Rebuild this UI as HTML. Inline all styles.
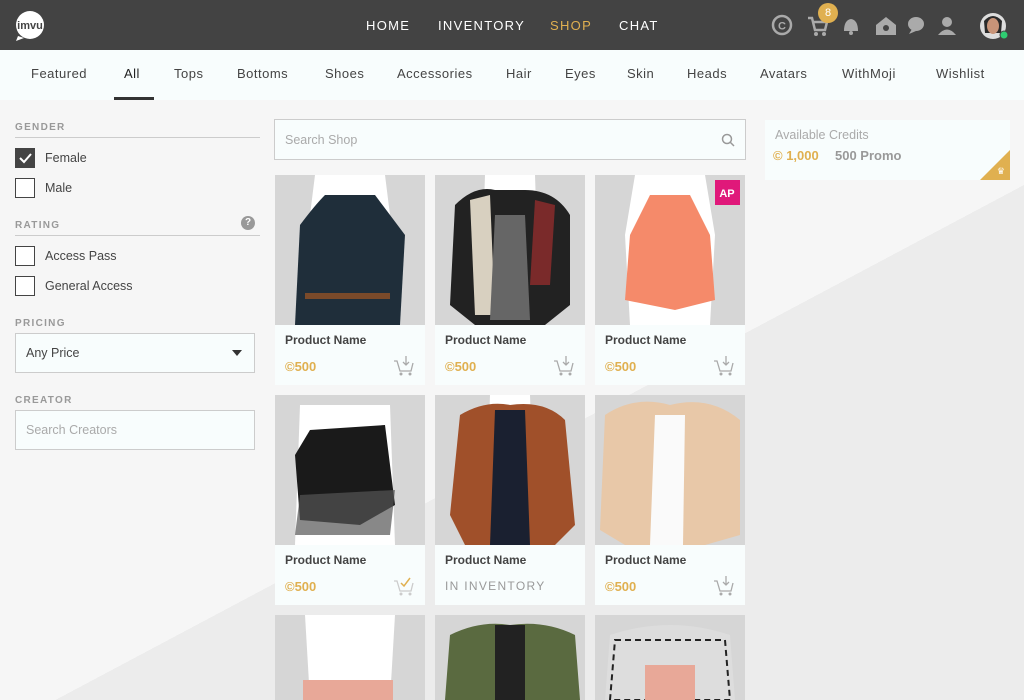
<!DOCTYPE html>
<html><head><meta charset="utf-8"><style>
*{box-sizing:border-box;margin:0;padding:0}
html,body{width:1024px;height:700px;overflow:hidden}
body{font-family:"Liberation Sans",sans-serif;background:#f2f2f2;position:relative}
.bgdiag{position:absolute;left:0;top:100px;width:1024px;height:600px;background:linear-gradient(152deg,#f6f6f6 0,#f6f6f6 55%,#ececec 55%,#ececec 100%)}
.hdr{position:absolute;left:0;top:0;width:1024px;height:50px;background:#434343}
.nav{position:absolute;top:18px;font-size:13px;letter-spacing:1.3px;color:#fff}
.sub{position:absolute;left:0;top:50px;width:1024px;height:50px;background:#f8fdfd}
.sub span{position:absolute;top:16px;font-size:13px;color:#444;letter-spacing:.5px}
.lbl{position:absolute;left:15px;font-size:10px;letter-spacing:1.3px;color:#999;font-weight:bold}
.line{position:absolute;left:15px;width:245px;height:1px;background:#ccc}
.cb{position:absolute;left:15px;width:20px;height:20px;border:1px solid #444;background:#fff}
.cbt{position:absolute;left:45px;font-size:12.5px;color:#444}
.box{position:absolute;background:#f8fdfd;border:1px solid #ccc}
.card{position:absolute;width:150px;height:210px;background:#f8fdfd;overflow:hidden}
.card svg{display:block}
.pn{position:absolute;left:10px;top:158px;font-size:12px;font-weight:bold;color:#444}
.pr{position:absolute;left:10px;top:184px;font-size:13px;color:#e0b050;font-weight:bold}
.cart{position:absolute;right:10px;top:180px}
</style></head><body>
<div class="bgdiag"></div>
<div class="hdr">
<svg style="position:absolute;left:14px;top:10px" width="32" height="32" viewBox="0 0 32 32"><circle cx="16" cy="15" r="14" fill="#fff"/><path d="M4 26 L2 31 L10 28Z" fill="#fff"/><text x="16" y="19" font-size="11" font-weight="bold" text-anchor="middle" fill="#434343" font-family="Liberation Sans">imvu</text></svg>
<span class="nav" style="left:366px">HOME</span><span class="nav" style="left:438px">INVENTORY</span><span class="nav" style="left:550px;color:#e0b050">SHOP</span><span class="nav" style="left:619px">CHAT</span>
<svg style="position:absolute;left:770px;top:13px" width="240" height="26" viewBox="0 0 240 26">
<circle cx="12" cy="12" r="9" fill="none" stroke="#aaa" stroke-width="2.5"/><text x="12" y="16.5" font-size="11" font-weight="bold" text-anchor="middle" fill="#aaa" font-family="Liberation Sans">C</text>
<path d="M38 5h4l3 12h10l2-8H44" fill="none" stroke="#aaa" stroke-width="2.5"/><circle cx="46" cy="21" r="2" fill="#aaa"/><circle cx="54" cy="21" r="2" fill="#aaa"/>
<path d="M74 18 Q74 7 81 6 Q88 7 88 18Z" fill="#aaa"/><circle cx="81" cy="20" r="2" fill="#aaa"/>
<path d="M106 12 L116 4 L126 12 V22 H106Z" fill="#aaa"/><circle cx="116" cy="15" r="3" fill="#434343"/>
<ellipse cx="146" cy="11" rx="8" ry="7" fill="#aaa"/><path d="M142 16l-3 5 7-3z" fill="#aaa"/>
<circle cx="177" cy="9" r="5" fill="#aaa"/><path d="M168 22 Q177 11 186 22Z" fill="#aaa"/>
<circle cx="223" cy="13" r="13" fill="#ddd"/><path d="M214 8 Q223 -2 232 8 L231 20 L215 20Z" fill="#2a2a2a"/><ellipse cx="223" cy="13" rx="6" ry="8" fill="#c89478"/><circle cx="234" cy="22" r="4" fill="#2ecc71" stroke="#434343"/>
</svg>
<div style="position:absolute;left:818px;top:3px;width:20px;height:20px;border-radius:50%;background:#e0b050;color:#fff;font-size:11px;text-align:center;line-height:20px">8</div>
</div>
<div class="sub">
<span style="left:31px">Featured</span><span style="left:124px;color:#222">All</span><span style="left:174px">Tops</span><span style="left:237px">Bottoms</span><span style="left:325px">Shoes</span><span style="left:397px">Accessories</span><span style="left:506px">Hair</span><span style="left:565px">Eyes</span><span style="left:627px">Skin</span><span style="left:687px">Heads</span><span style="left:760px">Avatars</span><span style="left:842px">WithMoji</span><span style="left:936px">Wishlist</span>
<div style="position:absolute;left:114px;top:47px;width:40px;height:3px;background:#333"></div>
</div>
<div class="lbl" style="top:122px">GENDER</div><div class="line" style="top:137px"></div>
<div class="cb" style="top:148px;background:#444"><svg width="18" height="18"><path d="M4 9l4 4 7-8" stroke="#fff" stroke-width="2" fill="none"/></svg></div><div class="cbt" style="top:151px">Female</div>
<div class="cb" style="top:178px"></div><div class="cbt" style="top:181px">Male</div>
<div class="lbl" style="top:220px">RATING</div><div class="line" style="top:235px"></div>
<div style="position:absolute;left:241px;top:216px;width:14px;height:14px;border-radius:50%;background:#999;color:#fff;font-size:10px;text-align:center;line-height:14px;font-weight:bold">?</div>
<div class="cb" style="top:246px"></div><div class="cbt" style="top:249px">Access Pass</div>
<div class="cb" style="top:276px"></div><div class="cbt" style="top:279px">General Access</div>
<div class="lbl" style="top:318px">PRICING</div>
<div class="box" style="left:15px;top:333px;width:240px;height:40px"><span style="position:absolute;left:10px;top:12px;font-size:12.5px;color:#444">Any Price</span><span style="position:absolute;right:12px;top:16px;border:5px solid transparent;border-top:6px solid #333"></span></div>
<div class="lbl" style="top:395px">CREATOR</div>
<div class="box" style="left:15px;top:410px;width:240px;height:40px"><span style="position:absolute;left:10px;top:12px;font-size:12.5px;color:#aaa">Search Creators</span></div>
<div class="box" style="left:274px;top:119px;width:472px;height:41px"><span style="position:absolute;left:10px;top:13px;font-size:12.5px;color:#aaa">Search Shop</span>
<svg style="position:absolute;right:10px;top:13px" width="14" height="14"><circle cx="6" cy="6" r="4.5" stroke="#999" stroke-width="1.5" fill="none"/><path d="M9 9l4 4" stroke="#999" stroke-width="1.5"/></svg></div>
<div style="position:absolute;left:765px;top:120px;width:245px;height:60px;background:#f8fdfd;overflow:hidden">
<span style="position:absolute;left:10px;top:8px;font-size:12.5px;color:#aaa">Available Credits</span>
<span style="position:absolute;left:8px;top:28px;font-size:13px;color:#e0b050;font-weight:bold">© 1,000</span>
<span style="position:absolute;left:70px;top:28px;font-size:13px;color:#999;font-weight:bold">500 Promo</span>
<div style="position:absolute;right:0;bottom:0;width:0;height:0;border-left:30px solid transparent;border-bottom:30px solid #e0b050"></div>
<span style="position:absolute;right:5px;bottom:3px;font-size:9px;color:#fff">♛</span></div>

<div class="card" style="left:275px;top:175px"><svg width="150" height="150"><rect width="150" height="150" fill="#d6d6d6"/><path d="M40 0h70l5 40-5 110H40L35 40Z" fill="#fff"/><path d="M25 50 Q40 30 50 20 L100 20 Q115 40 130 60 L125 150 H20Z" fill="#1f2e3a"/><rect x="30" y="118" width="85" height="6" fill="#7a4a2a"/></svg><div class="pn">Product Name</div><div class="pr">©500</div><svg class="cart" width="22" height="22"><path d="M1 6h3l3 10h11l2-8" fill="none" stroke="#aaa" stroke-width="1.3"/><path d="M13 1v9m-3-3l3 3 3-3" stroke="#aaa" fill="none" stroke-width="1.3"/><circle cx="8" cy="19" r="1.5" fill="#aaa"/><circle cx="17" cy="19" r="1.5" fill="#aaa"/></svg></div>
<div class="card" style="left:435px;top:175px"><svg width="150" height="150"><rect width="150" height="150" fill="#d6d6d6"/><path d="M50 0h50l5 150H45Z" fill="#fff"/><path d="M20 30 Q40 10 60 15 L90 15 Q120 15 135 40 L135 130 L110 150 H40 L15 130Z" fill="#222"/><path d="M35 25 L55 20 L60 140 L40 140Z" fill="#d8d0c0"/><path d="M60 40 L90 40 L95 145 L55 145Z" fill="#666"/><path d="M100 25 L120 30 L115 110 L95 110Z" fill="#7a2a2a"/></svg><div class="pn">Product Name</div><div class="pr">©500</div><svg class="cart" width="22" height="22"><path d="M1 6h3l3 10h11l2-8" fill="none" stroke="#aaa" stroke-width="1.3"/><path d="M13 1v9m-3-3l3 3 3-3" stroke="#aaa" fill="none" stroke-width="1.3"/><circle cx="8" cy="19" r="1.5" fill="#aaa"/><circle cx="17" cy="19" r="1.5" fill="#aaa"/></svg></div>
<div class="card" style="left:595px;top:175px"><svg width="150" height="150"><rect width="150" height="150" fill="#d6d6d6"/><path d="M40 0h70l10 60-5 90H35L30 60Z" fill="#fff"/><path d="M55 20 L95 20 L115 60 L120 125 L80 135 L30 125 L35 60Z" fill="#f58a6a"/><rect x="120" y="5" width="25" height="25" fill="#e0187a"/><text x="132" y="22" font-size="11" font-weight="bold" fill="#fff" text-anchor="middle" font-family="Liberation Sans">AP</text></svg><div class="pn">Product Name</div><div class="pr">©500</div><svg class="cart" width="22" height="22"><path d="M1 6h3l3 10h11l2-8" fill="none" stroke="#aaa" stroke-width="1.3"/><path d="M13 1v9m-3-3l3 3 3-3" stroke="#aaa" fill="none" stroke-width="1.3"/><circle cx="8" cy="19" r="1.5" fill="#aaa"/><circle cx="17" cy="19" r="1.5" fill="#aaa"/></svg></div>

<div class="card" style="left:275px;top:395px"><svg width="150" height="150"><rect width="150" height="150" fill="#d6d6d6"/><path d="M25 10h90l5 140H20Z" fill="#fff"/><path d="M35 35 L110 30 L120 110 L85 130 L25 125 L20 60Z" fill="#1a1a1a"/><path d="M25 100 L120 95 L115 140 L20 140Z" fill="#555" opacity=".7"/></svg><div class="pn">Product Name</div><div class="pr">©500</div><svg class="cart" width="22" height="22"><path d="M1 6h3l3 10h11l2-8" fill="none" stroke="#ccc" stroke-width="1.3"/><path d="M8 8l3 3 6-8" stroke="#e0b050" fill="none" stroke-width="1.5"/><circle cx="8" cy="19" r="1.5" fill="#ccc"/><circle cx="17" cy="19" r="1.5" fill="#ccc"/></svg></div>
<div class="card" style="left:435px;top:395px"><svg width="150" height="150"><rect width="150" height="150" fill="#d6d6d6"/><path d="M55 0h40l5 150H50Z" fill="#fff"/><path d="M25 20 Q50 5 75 10 Q110 5 130 25 L140 130 L120 150 H30 L15 120Z" fill="#a0502a"/><path d="M60 15 L90 15 L95 150 L55 150Z" fill="#1a2030"/></svg><div class="pn">Product Name</div><div class="pr" style="color:#999;font-weight:normal;letter-spacing:1.3px;font-size:12px">IN INVENTORY</div></div>
<div class="card" style="left:595px;top:395px"><svg width="150" height="150"><rect width="150" height="150" fill="#d6d6d6"/><path d="M10 20 Q40 0 75 10 Q115 0 145 25 L145 140 L110 150 H30 L5 135Z" fill="#e8c8a8"/><path d="M60 20 L90 20 L88 150 L55 150Z" fill="#fafafa"/></svg><div class="pn">Product Name</div><div class="pr">©500</div><svg class="cart" width="22" height="22"><path d="M1 6h3l3 10h11l2-8" fill="none" stroke="#aaa" stroke-width="1.3"/><path d="M13 1v9m-3-3l3 3 3-3" stroke="#aaa" fill="none" stroke-width="1.3"/><circle cx="8" cy="19" r="1.5" fill="#aaa"/><circle cx="17" cy="19" r="1.5" fill="#aaa"/></svg></div>

<div class="card" style="left:275px;top:615px;height:85px"><svg width="150" height="85"><rect width="150" height="85" fill="#d6d6d6"/><path d="M30 0h90l-5 85H35Z" fill="#fff"/><rect x="28" y="65" width="90" height="20" fill="#e8a898"/></svg></div>
<div class="card" style="left:435px;top:615px;height:85px"><svg width="150" height="85"><rect width="150" height="85" fill="#d6d6d6"/><path d="M15 20 Q45 5 75 10 Q110 5 140 20 L145 85 H10Z" fill="#5a6a40"/><path d="M60 10 L90 10 L90 85 L60 85Z" fill="#222"/></svg></div>
<div class="card" style="left:595px;top:615px;height:85px"><svg width="150" height="85"><rect width="150" height="85" fill="#d6d6d6"/><path d="M15 20 Q75 0 135 20 L140 85 H10Z" fill="#ddd"/><path d="M20 25 L130 25 L135 85 L15 85Z" fill="none" stroke="#222" stroke-width="2" stroke-dasharray="6 4"/><rect x="50" y="50" width="50" height="35" fill="#e8a898"/></svg></div>
</body></html>
